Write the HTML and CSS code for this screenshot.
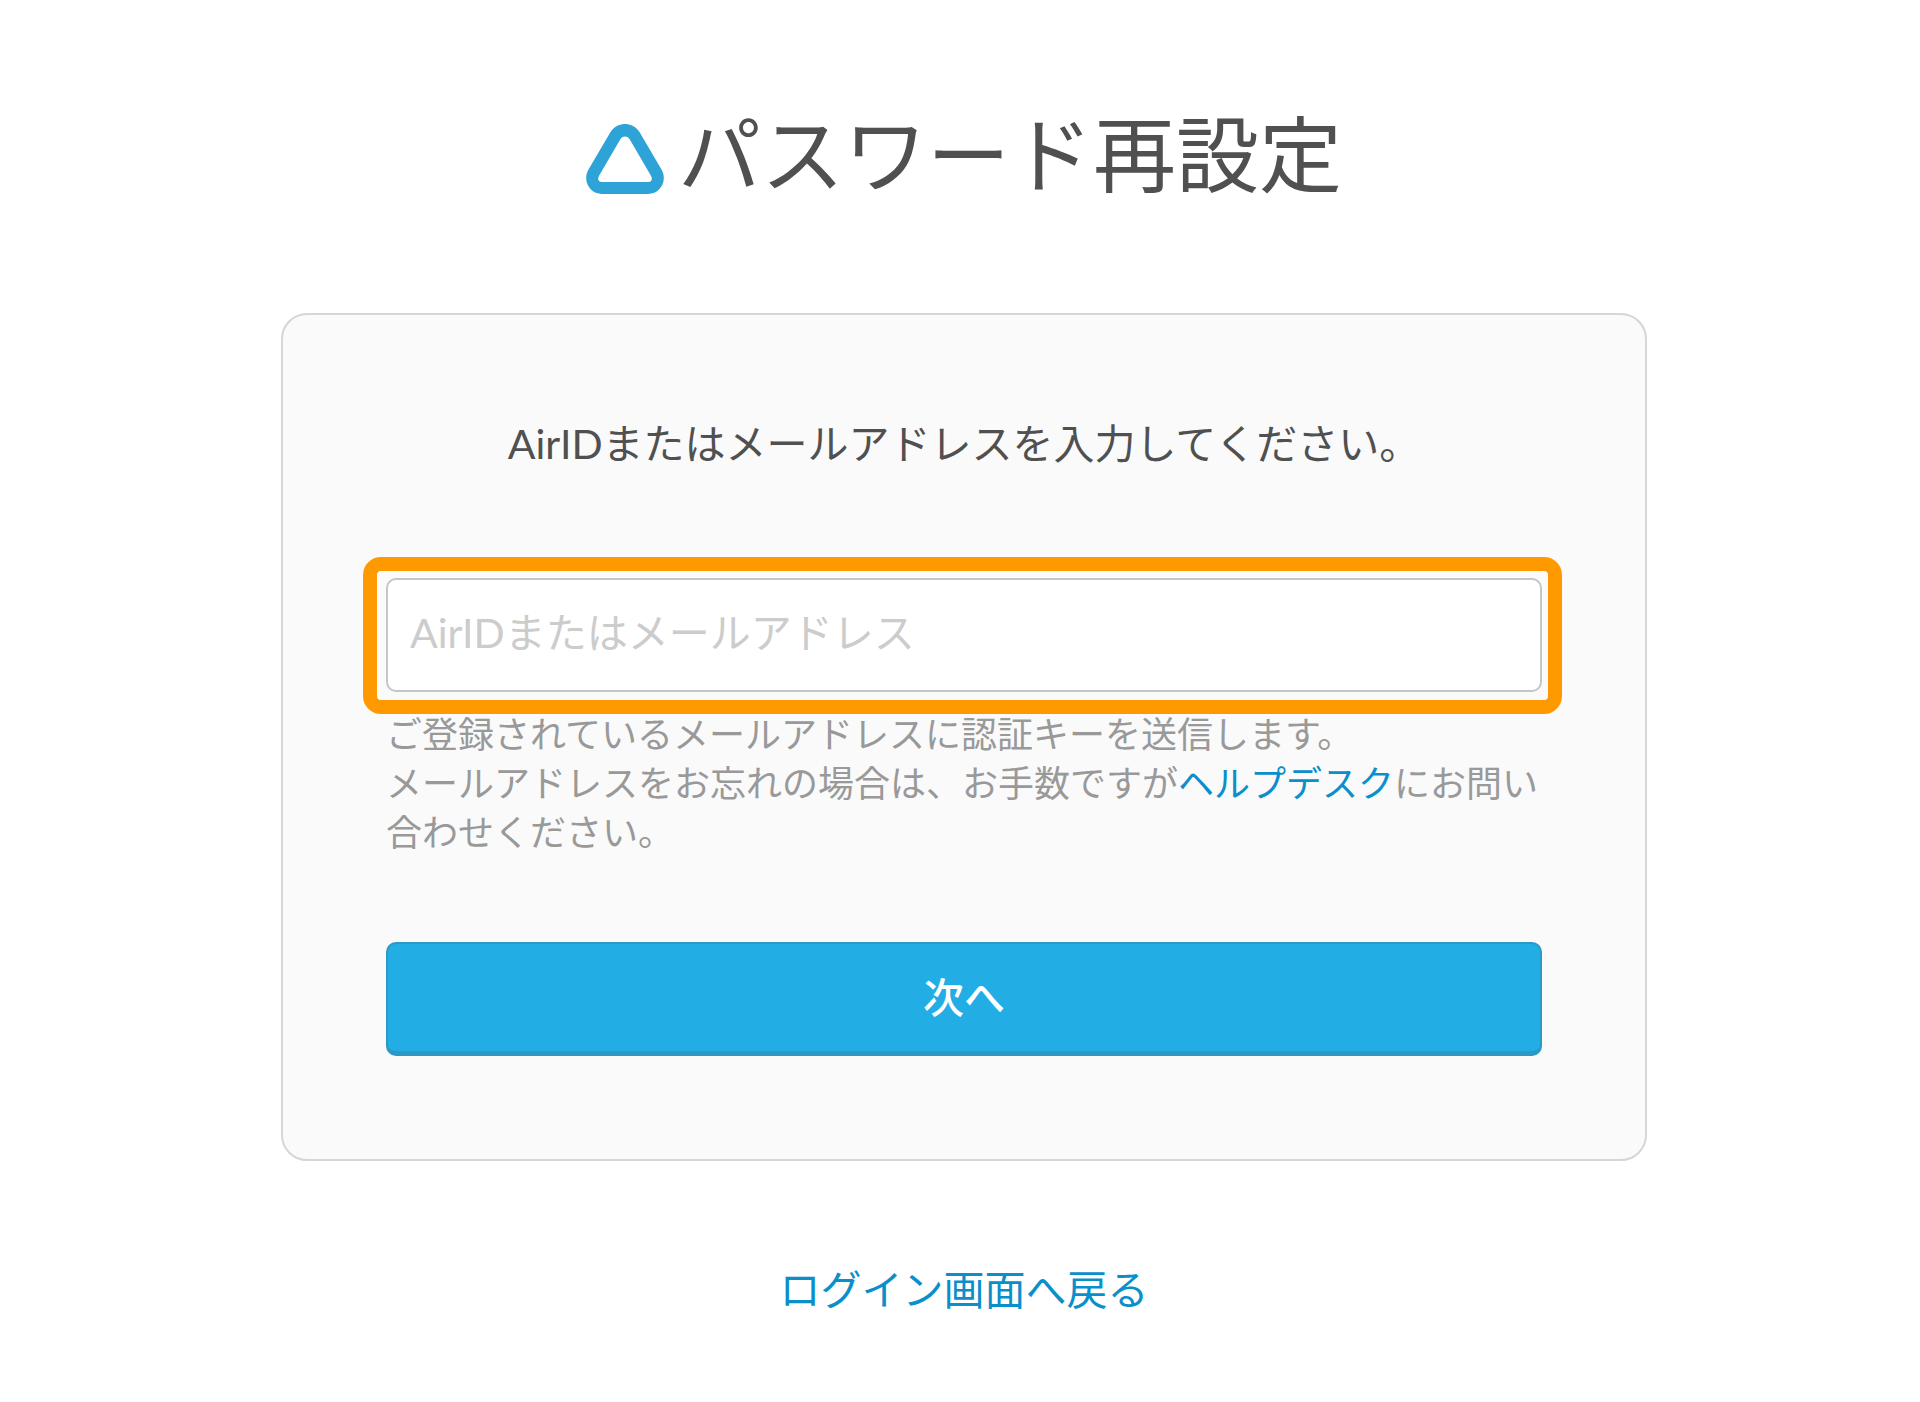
FILE: index.html
```html
<!DOCTYPE html>
<html lang="ja">
<head>
<meta charset="utf-8">
<meta name="viewport" content="width=device-width, initial-scale=1">
<title>パスワード再設定</title>
<link rel="stylesheet" href="styles.css">
</head>
<body>
<main class="page">
  <h1 class="title">
    <svg class="logo" viewBox="0 0 78 70" aria-hidden="true">
      <path fill="#2ea3d8" fill-rule="evenodd" d="M24.500 8C31.500-2.700 46.500-2.700 53.500 8L75.500 45.500C82 57 74 70 62 70H16C4 70-4 57 2.500 45.500ZM34.500 15L13.200 51.500C11 55 12.500 58 16 58H62C65.500 58 67 55 64.800 51.500L43.500 15C41.500 11.700 36.500 11.700 34.500 15Z"/>
    </svg>
    <span>パスワード再設定</span>
  </h1>
  <form class="card">
    <label class="lead" for="account">AirIDまたはメールアドレスを入力してください。</label>
    <div class="field">
      <input class="input" id="account" type="text" placeholder="AirIDまたはメールアドレス">
    </div>
    <p class="help">ご登録されているメールアドレスに認証キーを送信します。<br>メールアドレスをお忘れの場合は、お手数ですが<a class="link" href="#">ヘルプデスク</a>にお問い合わせください。</p>
    <button class="button" type="submit">次へ</button>
  </form>
  <a class="link back" href="#">ログイン画面へ戻る</a>
</main>
</body>
</html>
```
FILE: styles.css
```css
* {
  box-sizing: border-box;
}

body {
  margin: 0;
  background: #fff;
  color: #505050;
  font-family: Lato, "Noto Sans CJK JP", sans-serif;
  font-size: 41px;
  line-height: 62px;
}

.page {
  display: flex;
  flex-direction: column;
  align-items: center;
  padding: 94px 16px 80px 24px;
}

.title {
  display: flex;
  align-items: center;
  gap: 14px;
  margin: 0 0 99px;
  font-size: 83px;
  font-weight: 400;
  line-height: 120px;
}

.logo {
  width: 78px;
  height: 70px;
  margin-top: 10px;
}

.card {
  display: flex;
  flex-direction: column;
  width: 100%;
  max-width: 1366px;
  padding: 98px 103px 103px;
  background: #fafafa;
  border: 2px solid #d6d6d6;
  border-radius: 26px;
}

.lead {
  margin-bottom: 103px;
  text-align: center;
}

.field {
  position: relative;
  display: flex;
  margin-bottom: 18px;
}

/* Highlight ring laid over the field */
.field::after {
  content: "";
  position: absolute;
  inset: -21px -20px -22px -23px;
  border: 14px solid #ff9900;
  border-radius: 18px;
  pointer-events: none;
}

.input {
  width: 100%;
  height: 114px;
  padding: 0 22px 6px;
  background: #fff;
  border: 2px solid #c6c6c6;
  border-radius: 10px;
  color: #505050;
  font: inherit;
  outline: none;
}

.input::placeholder {
  color: #ccc;
  opacity: 1;
}

.help {
  margin: 0 0 85px;
  color: #999;
  font-size: 36px;
  line-height: 49px;
}

.link {
  color: #0b8fcb;
  text-decoration: none;
}

.button {
  height: 114px;
  padding: 0;
  background: #22ade5;
  border: 2px solid #2b98c6;
  border-bottom-width: 5px;
  border-radius: 10px;
  color: #fff;
  font: inherit;
  font-weight: 500;
}

.back {
  margin-top: 98px;
}
```
